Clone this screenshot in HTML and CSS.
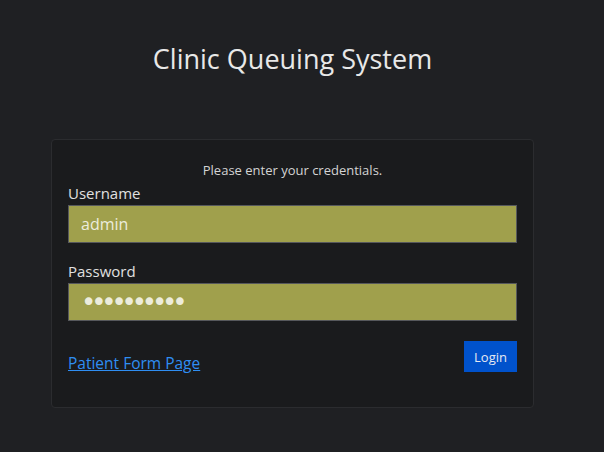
FILE: index.html
```html
<!DOCTYPE html>
<html>
<head>
<meta charset="utf-8">
<link rel="stylesheet" href="styles.css">
</head>
<body>
<main class="page">
  <h1 class="title">Clinic Queuing System</h1>
  <form class="card">
    <p class="hint">Please enter your credentials.</p>
    <label class="label" for="u">Username</label>
    <input class="field" id="u" type="text" value="admin">
    <label class="label" for="p">Password</label>
    <input class="field field-pass" id="p" type="password" value="adminadmin">
    <div class="actions">
      <a class="link" href="#">Patient Form Page</a>
      <button class="btn" type="button">Login</button>
    </div>
  </form>
</main>
</body>
</html>
```
FILE: styles.css
```css
html, body {
  margin: 0;
  background: #1f2023;
  height: 100%;
}
body {
  font-family: "Open Sans", "Noto Sans", sans-serif;
  color: #e6e6e6;
}
.page {
  width: 585px;
  display: flex;
  flex-direction: column;
  align-items: center;
}
.title {
  margin: 41px 0 0;
  font-weight: 400;
  font-size: 27px;
  line-height: 36px;
  color: #e8e8e8;
}
.card {
  box-sizing: border-box;
  margin-top: 62px;
  width: 483px;
  height: 269px;
  padding: 20px 16px 0;
  background: #1a1b1d;
  border: 1px solid #2b2c2f;
  border-radius: 4px;
  display: flex;
  flex-direction: column;
}
.hint {
  margin: 0;
  text-align: center;
  font-size: 13px;
  line-height: 20px;
  color: #d4d4d4;
}
.label {
  font-size: 15px;
  line-height: 20px;
  margin-top: 3px;
  color: #e0e0e0;
}
.hint + .label { margin-top: 3px; }
.field + .label { margin-top: 18px; }
.field {
  box-sizing: border-box;
  height: 38px;
  margin: 2px 0 0;
  padding: 0 12px;
  background: #a0a04c;
  border: 1px solid #56585c;
  color: #ececdc;
  font-family: inherit;
  font-size: 16px;
  outline: none;
}
.field-pass {
  font-family: "DejaVu Sans", sans-serif;
  font-size: 26px;
  letter-spacing: -5.2px;
  padding-left: 12px;
}
.actions {
  margin-top: 20px;
  display: flex;
  justify-content: space-between;
  align-items: flex-start;
}
.link {
  margin-top: 11px;
  color: #2f8ef2;
  font-size: 15.5px;
  line-height: 22px;
}
.btn {
  width: 53px;
  height: 31px;
  padding: 0;
  border: none;
  background: #0052cc;
  color: #e6e9f2;
  font-family: inherit;
  font-size: 13px;
}
```
